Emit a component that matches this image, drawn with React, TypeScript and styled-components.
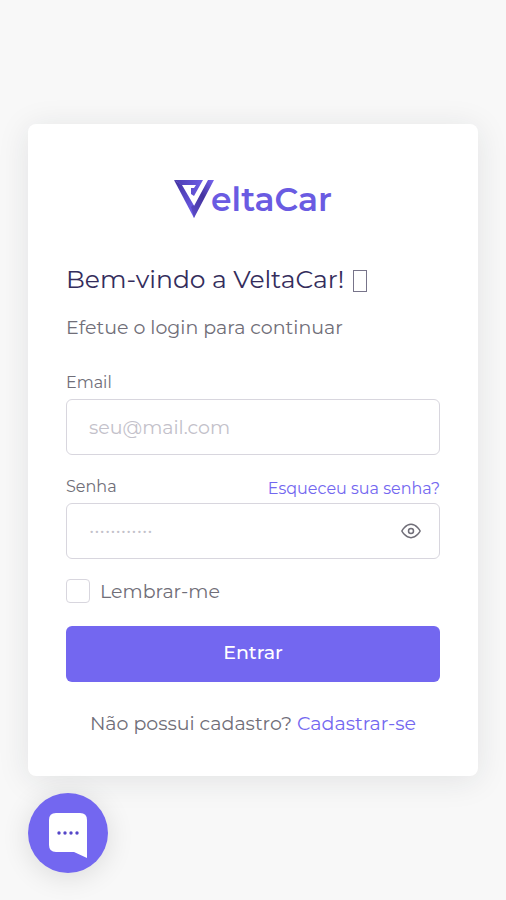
import React, { useState } from "react";
import styled, { createGlobalStyle } from "styled-components";

const violet = "#7367f0";
const ink = "#706e78";

const GlobalStyle = createGlobalStyle`
  *, *::before, *::after { box-sizing: border-box; }
  body {
    margin: 0;
    background: #f8f8f8;
    color: ${ink};
    font-family: Montserrat, Inter, sans-serif;
    font-size: 19px;
  }
`;

const Page = styled.main`
  min-height: 100vh;
  display: flex;
  align-items: center;
  justify-content: center;
  padding: 28px;
`;

const Card = styled.section`
  width: 100%;
  max-width: 480px;
  padding: 53px 38px 38px;
  display: flex;
  flex-direction: column;
  background: #fff;
  border-radius: 8px;
  box-shadow: 0 4px 32px rgba(34, 41, 47, 0.1);
`;

const Brand = styled.a`
  display: flex;
  justify-content: center;
  align-items: center;
  height: 44px;
  color: #6a5be2;
  font-size: 33px;
  font-weight: 600;
  line-height: 44px;
  text-decoration: none;
`;

const BrandMark = styled.svg`
  width: 41px;
  height: 38px;
  margin-right: -4px;
`;

const Title = styled.h1`
  display: flex;
  align-items: center;
  gap: 9px;
  margin: 42px 0 0;
  color: #342d5c;
  font-size: 25px;
  font-weight: 400;
  line-height: 32px;
`;

const EmptyGlyph = styled.span`
  width: 14px;
  height: 22px;
  margin-top: 4px;
  border: 1px solid #77748a;
`;

const Lead = styled.p`
  margin: 19px 0 0;
  line-height: 28px;
`;

const Form = styled.form`
  display: flex;
  flex-direction: column;
  margin-top: 29px;
`;

const Field = styled.div`
  display: flex;
  flex-direction: column;
  margin-bottom: 20px;
`;

const LabelRow = styled.div`
  display: flex;
  justify-content: space-between;
  align-items: center;
  height: 24px;
  margin-bottom: 4px;
`;

const Label = styled.label`
  font-size: 16px;
  line-height: 20px;
`;

const TextLink = styled.a<{ $small?: boolean }>`
  color: ${violet};
  font-size: ${(p) => (p.$small ? "16px" : "inherit")};
  line-height: 20px;
  text-decoration: none;
  padding-top: ${(p) => (p.$small ? "4px" : "0")};
`;

const InputBox = styled.div`
  display: flex;
  align-items: center;
  height: 56px;
  border: 1px solid #d8d6de;
  border-radius: 6px;
  &:focus-within { border-color: ${violet}; }
`;

const Input = styled.input<{ $dots?: boolean }>`
  flex: 1;
  min-width: 0;
  height: 100%;
  padding: ${(p) => (p.$dots ? "0 22px 4px" : "0 22px")};
  border: 0;
  outline: 0;
  background: transparent;
  color: ${ink};
  font: inherit;
  font-size: ${(p) => (p.$dots ? "21px" : "19px")};
  &::placeholder { color: #c3c1ca; opacity: 1; }
`;

const EyeButton = styled.button`
  display: flex;
  margin-right: 18px;
  padding: 0;
  border: 0;
  background: none;
  color: ${ink};
  cursor: pointer;
`;

const Remember = styled.label`
  display: flex;
  align-items: center;
  gap: 10px;
  height: 24px;
`;

const Checkbox = styled.input`
  appearance: none;
  width: 24px;
  height: 24px;
  margin: 0;
  border: 1px solid #d8d6de;
  border-radius: 4px;
  background: #fff;
  &:checked { background: ${violet}; border-color: ${violet}; }
`;

const Submit = styled.button`
  height: 56px;
  margin-top: 23px;
  padding: 0 20px 4px;
  border: 0;
  border-radius: 6px;
  background: ${violet};
  color: #fff;
  font: inherit;
  font-weight: 500;
  cursor: pointer;
`;

const Signup = styled.p`
  margin: 28px 0 0;
  line-height: 28px;
  text-align: center;
`;

const ChatButton = styled.button`
  position: fixed;
  left: 28px;
  bottom: 27px;
  width: 80px;
  height: 80px;
  padding: 0;
  border: 0;
  border-radius: 50%;
  background: ${violet};
  box-shadow: 0 4px 28px rgba(0, 0, 0, 0.12);
  cursor: pointer;
`;

export default function App() {
  const [visible, setVisible] = useState(false);

  return (
    <>
      <GlobalStyle />
      <Page>
        <Card>
          <Brand href="#" aria-label="VeltaCar">
            <BrandMark viewBox="0 0 41 38" aria-hidden="true">
              <defs>
                <linearGradient id="left" x1="0" y1="0" x2="0.6" y2="1">
                  <stop offset="0" stopColor="#40309c" />
                  <stop offset="1" stopColor="#6d5ce8" />
                </linearGradient>
                <linearGradient id="right" x1="1" y1="0" x2="0" y2="1">
                  <stop offset="0" stopColor="#7766f2" />
                  <stop offset="0.45" stopColor="#44339f" />
                  <stop offset="1" stopColor="#5d4dcc" />
                </linearGradient>
                <linearGradient id="top" x1="0" y1="0" x2="1" y2="0">
                  <stop offset="0" stopColor="#4b3cae" />
                  <stop offset="1" stopColor="#6c5ce6" />
                </linearGradient>
              </defs>
              <path d="M0 0 20 38 22 29 8 5Z" fill="url(#left)" />
              <path d="M34 0H40L20 38 17 27 19 25 20 26Z" fill="url(#right)" />
              <path d="M0 0H29L20 16 17 14V8H20L22 5H7Z" fill="url(#top)" />
            </BrandMark>
            <span>eltaCar</span>
          </Brand>
          <Title>
            Bem-vindo a VeltaCar!
            <EmptyGlyph aria-hidden="true" />
          </Title>
          <Lead>Efetue o login para continuar</Lead>
          <Form onSubmit={(e) => e.preventDefault()}>
            <Field>
              <LabelRow>
                <Label htmlFor="email">Email</Label>
              </LabelRow>
              <InputBox>
                <Input id="email" type="email" placeholder="seu@mail.com" />
              </InputBox>
            </Field>
            <Field>
              <LabelRow>
                <Label htmlFor="password">Senha</Label>
                <TextLink href="#" $small>Esqueceu sua senha?</TextLink>
              </LabelRow>
              <InputBox>
                <Input
                  id="password"
                  $dots
                  type={visible ? "text" : "password"}
                  placeholder="············"
                />
                <EyeButton type="button" aria-label="Mostrar senha" onClick={() => setVisible(!visible)}>
                  <svg width="20" height="20" viewBox="0 0 24 24" fill="none" stroke="currentColor" strokeWidth="1.8" strokeLinecap="round" strokeLinejoin="round">
                    <path d="M1 12s4-8 11-8 11 8 11 8-4 8-11 8-11-8-11-8z" />
                    <circle cx="12" cy="12" r="3" />
                  </svg>
                </EyeButton>
              </InputBox>
            </Field>
            <Remember>
              <Checkbox type="checkbox" />
              Lembrar-me
            </Remember>
            <Submit type="submit">Entrar</Submit>
          </Form>
          <Signup>
            Não possui cadastro? <TextLink href="#">Cadastrar-se</TextLink>
          </Signup>
        </Card>
      </Page>
      <ChatButton type="button" aria-label="Abrir chat">
        <svg width="80" height="80" viewBox="0 0 80 80" aria-hidden="true">
          <path d="M28 20H52Q59 20 59 27V65L46 59H28Q21 59 21 52V27Q21 20 28 20Z" fill="#fff" />
          <g fill="#5546c8">
            <circle cx="31" cy="40" r="1.7" />
            <circle cx="37" cy="40" r="1.7" />
            <circle cx="43" cy="40" r="1.7" />
            <circle cx="49" cy="40" r="1.7" />
          </g>
        </svg>
      </ChatButton>
    </>
  );
}
